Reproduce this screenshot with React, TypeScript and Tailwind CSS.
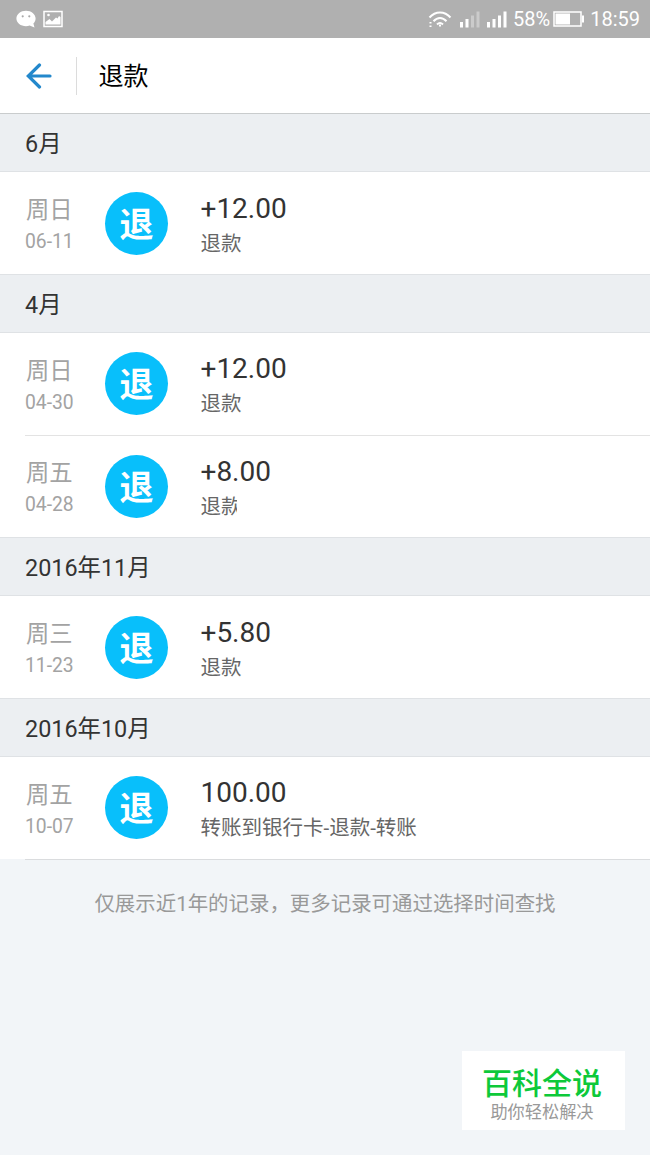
interface RefundRecord {
  weekday: string;
  date: string;
  amount: string;
  label: string;
  clipped?: boolean;
}

interface MonthGroup {
  title: string;
  records: RefundRecord[];
}

const groups: MonthGroup[] = [
  {
    title: '6月',
    records: [{ weekday: '周日', date: '06-11', amount: '+12.00', label: '退款' }],
  },
  {
    title: '4月',
    records: [
      { weekday: '周日', date: '04-30', amount: '+12.00', label: '退款' },
      { weekday: '周五', date: '04-28', amount: '+8.00', label: '退款', clipped: true },
    ],
  },
  {
    title: '2016年11月',
    records: [{ weekday: '周三', date: '11-23', amount: '+5.80', label: '退款' }],
  },
  {
    title: '2016年10月',
    records: [{ weekday: '周五', date: '10-07', amount: '100.00', label: '转账到银行卡-退款-转账' }],
  },
];

function StatusBar() {
  return (
    <div className="flex h-[38px] shrink-0 items-center justify-between bg-[#b0b0b0] pl-4 pr-[10px] text-white">
      <div className="flex items-center gap-[7px]">
        {/* Chat bubble */}
        <svg width="20" height="18" viewBox="0 0 20 18">
          <path d="M10 .8C4.700.8.400 4.200.400 8.500S4.700 16.200 10 16.200c1.300 0 2.500-.2 3.600-.6l4.900 1.900-1.100-4c1.300-1.300 2.200-3 2.200-5C19.600 4.200 15.300.8 10 .8Z" fill="#fff" />
          <circle cx="6.700" cy="6.300" r="1.100" fill="#a9a9a9" />
          <circle cx="13.300" cy="6.300" r="1.100" fill="#a9a9a9" />
        </svg>
        {/* Picture */}
        <svg width="20" height="18" viewBox="0 0 20 18">
          <path d="M1 1.500h18v15H1Z" fill="none" stroke="#fff" strokeWidth="1.500" />
          <path d="M2.500 14.500v-2.500l4-3 2.500 2.500 4-4 1.500 1 1.500-2.500 1.500 1v7.500Z" fill="#fff" />
          <circle cx="5.500" cy="5" r="1.300" fill="#fff" />
        </svg>
      </div>
      <div className="flex items-center">
        {/* Wifi */}
        <svg width="24" height="19" viewBox="0 0 24 19" fill="none" stroke="#fff" strokeWidth="2">
          <path d="M1.500 7.500C7.500.8 16.500.8 22.500 7.500" />
          <path d="M5.500 11.300c4-4.300 9-4.300 13 0" />
          <path d="M9 14.500c2-2 4-2 6 0" />
          <path d="M12 14.500v2M2.500 12v1.500M2.500 15.500v1.500" />
        </svg>
        {/* Signal, two SIM cards */}
        <svg className="ml-2" width="21" height="17" viewBox="0 0 21 17" fill="#fff">
          <path d="M0 11h3v5.500H0ZM5.500 8h3v8.500h-3Z" />
          <path d="M11 4.500h3v12h-3ZM16.500.5h3v16h-3Z" opacity=".35" />
        </svg>
        <svg className="ml-[6px]" width="21" height="17" viewBox="0 0 21 17" fill="#fff">
          <path d="M0 11h3v5.500H0ZM5.500 8h3v8.500h-3ZM11 4.500h3v12h-3ZM16.500.5h3v16h-3Z" />
        </svg>
        <span className="ml-[5px] text-[20px] leading-none">58%</span>
        <svg className="ml-[3px]" width="32" height="16" viewBox="0 0 32 16">
          <path d="M1 1h27v14H1Z" fill="none" stroke="#fff" strokeWidth="1.500" />
          <path d="M2.500 2.500H17v11H2.500ZM29 4.500h2v7h-2Z" fill="#fff" />
        </svg>
        <span className="ml-[5px] text-[20px] leading-none">18:59</span>
      </div>
    </div>
  );
}

function RecordRow({ record }: { record: RefundRecord }) {
  return (
    <div className="flex h-[101.900px] items-center bg-white pl-[25px]">
      <div className="w-[80px] shrink-0 pt-[6px] text-[#a3a3a3]">
        <div className="pl-px text-[23.300px] leading-8">{record.weekday}</div>
        <div className="text-[19.300px] leading-8">{record.date}</div>
      </div>
      <div className="flex size-[63px] shrink-0 items-center justify-center rounded-full bg-[#08bffb] pt-[3px] text-[34px] font-bold leading-none text-white">
        退
      </div>
      <div className="ml-[32.500px] pt-[4px]">
        <div className="text-[28px] leading-[35px] text-[#333]">{record.amount}</div>
        <div className={`h-[34px] overflow-hidden whitespace-nowrap pt-px text-[20.500px] leading-[34px] text-[#666] ${record.clipped ? 'w-[36px]' : ''}`}>
          {record.label}
        </div>
      </div>
    </div>
  );
}

export default function App() {
  return (
    <div className="relative flex h-[1155px] w-[650px] flex-col overflow-hidden bg-[#f2f5f8] font-[Roboto,'Noto_Sans_CJK_SC',sans-serif]">
      <StatusBar />

      {/* Header */}
      <header className="flex h-[75.400px] shrink-0 items-center bg-white pl-[26px]">
        <svg width="26" height="26" viewBox="0 0 26 26" fill="none" stroke="#2388cc" strokeWidth="3.200" strokeLinecap="round">
          <path d="M24 13H2.500M13.500 2 2.300 13l11.200 11" />
        </svg>
        <div className="ml-6 h-[38px] w-px bg-[#dcdcdc]" />
        <h1 className="ml-[21.500px] pt-[2px] text-[25px] leading-none text-black">退款</h1>
      </header>

      {/* Records by month */}
      <main>
        {groups.map((group, groupIndex) => (
          <section key={group.title}>
            <h2 className={`flex h-[58.700px] items-center border-y border-b-[#dfe2e5] bg-[#eceff2] pl-[25px] pt-[4px] text-[23.400px] text-[#333] ${groupIndex === 0 ? 'border-t-[#c9cccd]' : 'border-t-[#dfe2e5]'}`}>
              {group.title}
            </h2>
            {group.records.map((record, index) => (
              <div key={record.date} className="bg-white">
                {index > 0 && <div className="ml-[25px] h-px bg-[#e3e3e3]" />}
                <RecordRow record={record} />
              </div>
            ))}
          </section>
        ))}
        <div className="ml-[25px] h-px bg-[#dadcde]" />
      </main>

      <p className="mt-[28px] text-center text-[20.450px] leading-8 text-[#999]">
        仅展示近1年的记录，更多记录可通过选择时间查找
      </p>

      {/* Floating brand badge */}
      <div className="absolute bottom-[25px] right-[25px] flex h-[79px] w-[163px] flex-col items-center bg-white pr-[3px] pt-[15px]">
        <div className="text-[30px] font-medium leading-[36px] text-[#0dc93a]">百科全说</div>
        <div className="text-[17.200px] leading-[21px] text-[#999]">助你轻松解决</div>
      </div>
    </div>
  );
}
